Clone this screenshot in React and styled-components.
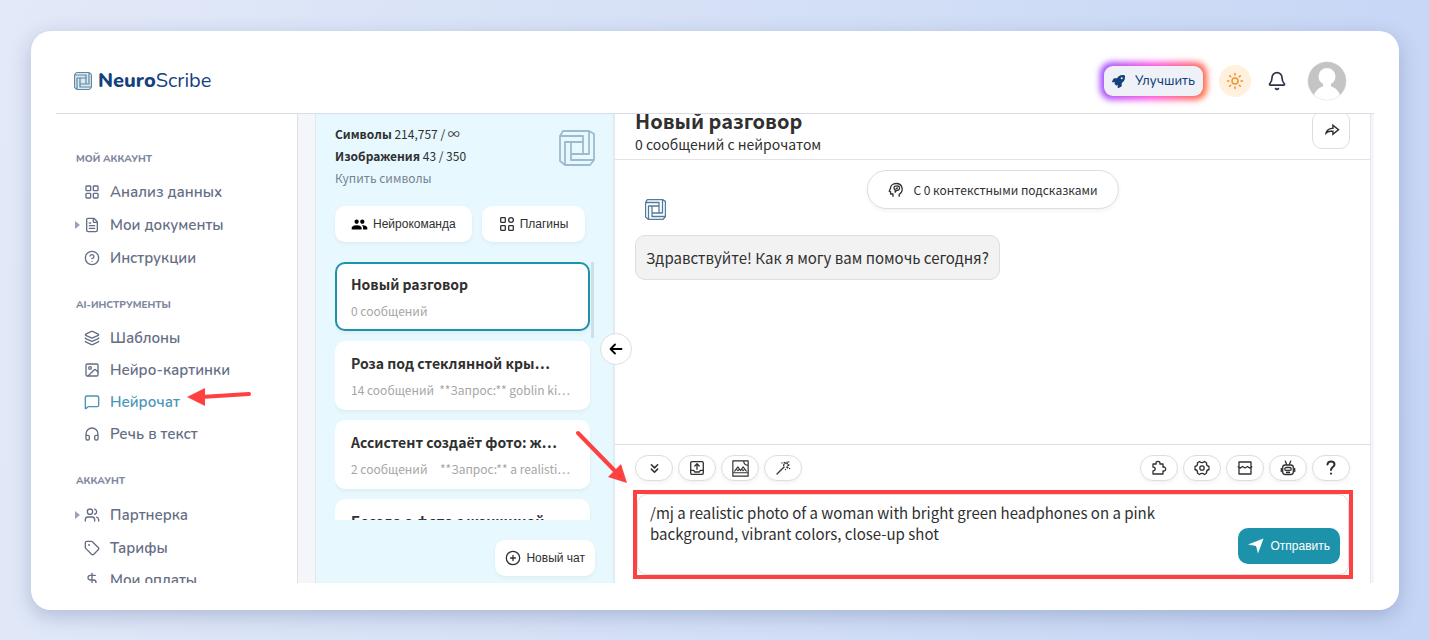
import React from "react";
import styled, { createGlobalStyle } from "styled-components";
import {
  Bell,
  ChevronsDown,
  CircleHelp,
  DollarSign,
  FileText,
  Headphones,
  Image,
  Layers,
  LayoutGrid,
  MessageSquare,
  Sun,
  Tag,
  Users,
} from "lucide-react";
import { FaRocket } from "react-icons/fa";
import { MdGroup } from "react-icons/md";
import { RiShareForwardLine } from "react-icons/ri";

const uiFont = `Nunito, "Open Sans", sans-serif`;
const chatFont = `"Noto Sans CJK SC", "Noto Sans", sans-serif`;

const GlobalStyle = createGlobalStyle`
  * {
    box-sizing: border-box;
  }

  body {
    margin: 0;
    font-family: ${uiFont};
    color: #303030;
  }

  button {
    font-family: "Liberation Sans", Arial, sans-serif;
    cursor: pointer;
  }
`;

const Page = styled.div`
  height: 100vh;
  padding: 31px 30px 30px 31px;
  display: flex;
  background: linear-gradient(100deg, #e2e9f8 0%, #d3dff6 55%, #c5d5f5 100%);
`;

const Card = styled.div`
  flex: 1;
  min-width: 0;
  display: flex;
  flex-direction: column;
  padding: 0 25px 27px;
  border-radius: 20px;
  background: white;
  box-shadow: 0 6px 20px rgba(70, 90, 140, 0.3);
`;

const TopBar = styled.header`
  height: 83px;
  flex-shrink: 0;
  display: flex;
  align-items: center;
  justify-content: space-between;
  padding: 18px 27px 0 18px;
  border-bottom: 1px solid #d8dde8;
`;

const Brand = styled.a`
  display: flex;
  align-items: center;
  gap: 6px;
  color: #14427c;
  font-size: 20px;
  line-height: 24px;
  text-decoration: none;

  b {
    font-weight: 800;
  }

  svg {
    color: #5c86a3;
    background: #dbe8ee;
    border-radius: 4px;
  }
`;

const TopActions = styled.div`
  display: flex;
  align-items: center;
`;

const UpgradeButton = styled.button`
  position: relative;
  display: flex;
  align-items: center;
  gap: 10px;
  height: 30px;
  padding: 0 8px;
  border: 0;
  border-radius: 9px;
  background: #eef2f8;
  color: #14427c;
  font-family: ${uiFont};
  font-size: 13px;
  font-weight: 500;
  transform-style: preserve-3d;

  &::before {
    content: "";
    position: absolute;
    inset: -4px;
    border-radius: 12px;
    background: linear-gradient(100deg, #9a4dff, #ff4fe0 50%, #ff6a35);
    filter: blur(3px);
    transform: translateZ(-1px);
  }
`;

const ThemeButton = styled.button`
  display: grid;
  place-items: center;
  width: 32px;
  height: 32px;
  margin-left: 16px;
  padding: 0;
  border: 0;
  border-radius: 50%;
  background: #fff1dd;
  color: #f0922b;
`;

const BellButton = styled.button`
  display: grid;
  place-items: center;
  margin: 0 20px 0 16px;
  padding: 0;
  border: 0;
  background: none;
  color: #2d3347;
`;

const Workspace = styled.div`
  flex: 1;
  min-height: 0;
  display: flex;
  overflow: hidden;
`;

const Nav = styled.nav`
  width: 242px;
  flex-shrink: 0;
  padding: 38px 0 0 20px;
  border-right: 1px solid #dcdfe9;
  overflow: hidden;
`;

const NavHeading = styled.h2`
  margin: 0 0 10px;
  color: #7f88a0;
  font-size: 10px;
  font-weight: 800;
  line-height: 14px;

  ul + & {
    margin-top: 24px;
  }
`;

const NavList = styled.ul`
  margin: 0;
  padding: 0;
  list-style: none;
`;

const NavLink = styled.a`
  position: relative;
  display: flex;
  align-items: center;
  height: ${(p) => (p.$expandable ? 34 : 32)}px;
  gap: 10px;
  padding-left: 8px;
  color: ${(p) => (p.$active ? "#4a94b8" : "#666e85")};
  font-size: 15px;
  font-weight: 600;
  text-decoration: none;

  &::before {
    content: "";
    display: ${(p) => (p.$expandable ? "block" : "none")};
    position: absolute;
    left: -1px;
    border: 4px solid transparent;
    border-left: 5px solid #99a1b8;
    border-right: 0;
  }
`;

const NavPointer = styled.svg`
  position: absolute;
  left: 111px;
  top: -17px;
  pointer-events: none;
`;

const Gutter = styled.div`
  width: ${(p) => p.$width}px;
  flex-shrink: 0;
  background: #f5f6fa;
  border-${(p) => p.$side}: 1px solid #e3e6f1;
`;

const ChatSidebar = styled.aside`
  position: relative;
  width: 299px;
  flex-shrink: 0;
  display: flex;
  flex-direction: column;
  padding: 9px 20px 7px 19px;
  background: #e7f8ff;
  box-shadow: inset -2px 0 2px rgba(0, 0, 0, 0.05);
  font-family: ${chatFont};
`;

const Usage = styled.div`
  display: flex;
  justify-content: space-between;
  margin-bottom: 17px;
  font-size: 12px;
  line-height: 22px;

  p {
    margin: 0;
  }

  a {
    color: #76828f;
    text-decoration: none;
  }

  svg {
    margin-top: 7px;
    color: #9bbccf;
  }
`;

const SidebarActions = styled.div`
  display: flex;
  gap: 10px;
  margin-bottom: 20px;
`;

const SidebarButton = styled.button`
  display: flex;
  align-items: center;
  justify-content: center;
  gap: 5px;
  height: 36px;
  padding: 0 ${(p) => p.$pad}px;
  border: 0;
  border-radius: 10px;
  background: white;
  color: #303030;
  font-size: 12px;
  box-shadow: 0 2px 4px rgba(0, 0, 0, 0.05);
`;

const ChatListWrap = styled.div`
  flex: 1;
  min-height: 0;
  display: flex;
  gap: 1px;
  overflow: hidden;
`;

const ChatList = styled.div`
  flex: 1;
  min-width: 0;
`;

const ScrollThumb = styled.div`
  width: 3px;
  height: 76px;
  margin-right: 1px;
  background: #cfdfe7;
`;

const ChatItem = styled.article`
  height: 69px;
  margin-bottom: 10px;
  padding: 9px 14px;
  border: 2px solid ${(p) => (p.$active ? "#1d93ab" : "white")};
  border-radius: 10px;
  background: white;
  box-shadow: 0 2px 4px rgba(0, 0, 0, 0.05);
  white-space: nowrap;

  h3 {
    margin: 0 0 8px;
    font-size: 14px;
    line-height: 22px;
  }
`;

const ChatItemInfo = styled.div`
  display: flex;
  justify-content: space-between;
  padding-right: 4px;
  color: #a6a6a6;
  font-size: 12px;
  line-height: 16px;
`;

const ChatSidebarFooter = styled.div`
  display: flex;
  justify-content: flex-end;
  padding-top: 20px;
`;

const CollapseButton = styled.button`
  position: absolute;
  top: 219px;
  right: -17px;
  z-index: 2;
  display: grid;
  place-items: center;
  width: 32px;
  height: 32px;
  padding: 0;
  border: 1px solid #dedede;
  border-radius: 50%;
  background: white;
  color: black;
`;

const ChatMain = styled.main`
  flex: 1;
  min-width: 0;
  display: flex;
  flex-direction: column;
  font-family: ${chatFont};
`;

const ChatHeader = styled.div`
  height: 46px;
  flex-shrink: 0;
  display: flex;
  align-items: flex-end;
  justify-content: space-between;
  padding: 0 20px 5px;
  overflow: hidden;
  border-bottom: 1px solid #e4e4e4;

  h1 {
    margin: 0;
    font-size: 20px;
    line-height: 26px;
  }

  p {
    margin: 0;
    font-size: 14px;
    line-height: 20px;
  }
`;

const ShareButton = styled.button`
  display: grid;
  place-items: center;
  width: 38px;
  height: 38px;
  margin-bottom: 5px;
  padding: 0;
  border: 1px solid #dedede;
  border-radius: 10px;
  background: white;
  color: #303030;
`;

const ChatBody = styled.div`
  position: relative;
  flex: 1;
  min-height: 0;
  padding: 39px 20px 0;
`;

const ContextPill = styled.button`
  position: absolute;
  top: 10px;
  left: 50%;
  transform: translateX(-50%);
  display: flex;
  align-items: center;
  gap: 10px;
  height: 39px;
  padding: 0 20px;
  border: 1px solid #dedede;
  border-radius: 20px;
  background: white;
  box-shadow: 0 2px 4px rgba(0, 0, 0, 0.05);
  color: #303030;
  font-family: ${chatFont};
  font-size: 12px;
  white-space: nowrap;
`;

const BotAvatar = styled.div`
  display: flex;
  margin: 0 0 15px 10px;
  color: #527c9c;
`;

const Bubble = styled.div`
  width: fit-content;
  padding: 10px;
  border: 1px solid #dedede;
  border-radius: 10px;
  background: #f2f2f2;
  font-size: 15px;
  line-height: 23px;
`;

const Composer = styled.form`
  padding: 10px 17px 4px 18px;
  border-top: 1px solid #dedede;
`;

const Tools = styled.div`
  display: flex;
  gap: 5px;
  margin: 0 3px 9px 2px;
`;

const ToolButton = styled.button`
  display: grid;
  place-items: center;
  width: 38px;
  height: 26px;
  padding: 0;
  border: 1px solid #dedede;
  border-radius: 20px;
  background: white;
  box-shadow: 0 2px 4px rgba(0, 0, 0, 0.05);
  color: #303030;
  ${(p) => p.$push && "margin-left: auto;"}
`;

const InputFrame = styled.div`
  position: relative;
  display: flex;
  border: 4px solid #ff4040;
`;

const MessageInput = styled.textarea`
  flex: 1;
  min-width: 0;
  height: 81px;
  padding: 7px 120px 7px 12px;
  border: 1px solid #dedede;
  border-radius: 10px;
  outline: none;
  resize: none;
  color: #303030;
  font-family: ${chatFont};
  font-size: 15px;
  line-height: 21px;
`;

const SendButton = styled.button`
  position: absolute;
  right: 9px;
  bottom: 11px;
  display: flex;
  align-items: center;
  justify-content: center;
  gap: 6px;
  height: 36px;
  padding: 0 10px;
  border: 0;
  border-radius: 10px;
  background: #1d93ab;
  color: white;
  font-size: 12px;
`;

const InputPointer = styled.svg`
  position: absolute;
  left: -63px;
  top: -66px;
  z-index: 3;
  pointer-events: none;
`;

const LogoMark = ({ size, stroke }) => (
  <svg width={size} height={size} viewBox="0 0 36 36" fill="none" stroke="currentColor" strokeWidth={stroke} strokeLinejoin="round">
    <path d="M4 1H30L35 4V30L31 35H6L1 31V6Z" />
    <path d="M1 6H24V24M30 1V24H12M35 30H12V12M6 35V12H24" />
  </svg>
);

// 16px line icons of the chat toolbar
const LineIcon = ({ size = 16, children }) => (
  <svg
    width={size}
    height={size}
    viewBox="0 0 16 16"
    fill="none"
    stroke="currentColor"
    strokeWidth="1.3"
    strokeLinecap="round"
    strokeLinejoin="round"
  >
    {children}
  </svg>
);

const PluginIcon = () => (
  <LineIcon>
    <rect x="1.7" y="1.7" width="4.6" height="4.6" rx=".5" />
    <rect x="1.7" y="9.7" width="4.6" height="4.6" rx=".5" />
    <rect x="9.7" y="9.7" width="4.6" height="4.6" rx=".5" />
    <circle cx="12" cy="4" r="2.4" />
  </LineIcon>
);

const AddIcon = () => (
  <LineIcon>
    <circle cx="8" cy="8" r="6.7" />
    <path d="M8 5.5v5M5.5 8h5" />
  </LineIcon>
);

const ArrowLeftIcon = () => (
  <LineIcon>
    <path d="M13.5 8H3M7 3.5L2.5 8L7 12.5" strokeWidth="1.8" />
  </LineIcon>
);

const BrainIcon = () => (
  <LineIcon>
    <path d="M11.3 14.3v-2.1C13.3 11 14.5 9 14.3 6.7C14 3.6 11.5 1.5 8.3 1.5C5 1.5 2.6 3.7 2.5 6.5L1.3 9.2L2.7 9.8V12h2.4v2.3" />
    <path d="M6.2 6.3C5.6 4.7 7.2 3.7 8.3 4.2C9.6 3.3 12 4.3 11.7 6.3C11.5 8.3 9.6 8.3 8.9 8.2L7.3 10.2V7.8C6.6 7.7 6.2 7.1 6.2 6.3ZM8.2 6.6L9.7 5.9" />
  </LineIcon>
);

const UploadIcon = () => (
  <LineIcon>
    <rect x="1.7" y="1.7" width="12.6" height="12.6" rx="1.2" />
    <path d="M8 9.3V4M5.8 6L8 3.8L10.2 6M1.7 10.3H4.7L5.7 12H10.3L11.3 10.3H14.3" />
  </LineIcon>
);

const PictureIcon = () => (
  <LineIcon size={17}>
    <path d="M11 .8H.8V15.2H15.2V5C13 5 11 4 11 .8H15.2V5M.8 12H15.2" strokeWidth="1.1" />
    <path d="M2.5 10.5L5.5 6.5L8 10L10.5 6.5L13.5 10.5M4.7 9.2L5.5 10L6.3 9.2M9.7 9.2L10.5 10L11.3 9.2" strokeWidth="1" />
  </LineIcon>
);

const WandIcon = () => (
  <LineIcon>
    <path d="M2 14L9 7" />
    <path d="M9.2 2.5L10.6 3.3L12 2.2L12.3 4L14 5L12.6 6L12.8 7.8L11.2 7M9 4.2L8.6 5.5M13.8 1.8V2M14.6 8.3V8.5M7 2.8V3M10.5 9.3V9.5" strokeDasharray="1.8 1.6" />
  </LineIcon>
);

const PuzzleIcon = () => (
  <LineIcon>
    <path d="M2 4H5.2C4.6 2.3 5.7 1.3 7 1.3C8.3 1.3 9.4 2.3 8.8 4H12V7.2C13.7 6.6 14.7 7.7 14.7 9C14.7 10.3 13.7 11.4 12 10.8V14H2V10.8C3.6 10.8 4.2 10 4.2 9C4.2 8 3.6 7.2 2 7.2Z" />
  </LineIcon>
);

const SettingsIcon = () => (
  <LineIcon>
    <path d="M5.5 1.5C7 2.8 9 2.8 10.5 1.5L12.5 2.8C12.2 4.8 13 6 15 6.5V9.5C13 10 12.2 11.2 12.5 13.2L10.5 14.5C9 13.2 7 13.2 5.5 14.5L3.5 13.2C3.8 11.2 3 10 1 9.5V6.5C3 6 3.8 4.8 3.5 2.8Z" />
    <circle cx="8" cy="8" r="2.2" />
  </LineIcon>
);

const BreakIcon = () => (
  <LineIcon>
    <path d="M2 6.5V2H14V6.5M1.2 6.8L3.5 8L5.5 6.5L8 8L10.5 6.5L12.5 8L14.8 6.8M2 8V14H14V8" />
  </LineIcon>
);

const RobotIcon = () => (
  <LineIcon>
    <path d="M5.3 1.2L6.7 4.5M10.7 1.2L9.3 4.5M1.3 8.5V11.5M14.7 8.5V11.5" />
    <rect x="2.7" y="5" width="10.6" height="9.5" rx="2.5" />
    <rect x="4.8" y="7.5" width="6.4" height="3" rx="1.5" />
    <path d="M6.5 12.5H9.5" />
  </LineIcon>
);

const QuestionIcon = () => (
  <LineIcon>
    <path d="M4.5 4.5C4.8 .5 11.5 .5 11.5 4.5C11.5 7 8 7.2 8 10M8 13.5V13.7" strokeWidth="2" />
  </LineIcon>
);

const SendIcon = () => (
  <svg width="16" height="16" viewBox="0 0 16 16" fill="currentColor">
    <path d="M0 6.5L15.5 .5L10 15.5L8 8Z" />
  </svg>
);

const UserAvatar = () => (
  <svg width="40" height="40" viewBox="0 0 40 40" role="img" aria-label="Профиль">
    <defs>
      <clipPath id="avatar-clip">
        <circle cx="20" cy="20" r="19" />
      </clipPath>
    </defs>
    <circle cx="20" cy="20" r="19.5" fill="#e6e8ee" />
    <g clipPath="url(#avatar-clip)">
      <rect width="40" height="40" fill="#c4c4c4" />
      <circle cx="20" cy="15.5" r="8.5" fill="white" />
      <rect x="16" y="20" width="8" height="8" fill="white" />
      <path d="M5.5 40C7 28 14 25 20 25C26 25 33 28 34.5 40Z" fill="white" />
    </g>
  </svg>
);

const navGroups = [
  {
    title: "МОЙ АККАУНТ",
    items: [
      { label: "Анализ данных", icon: LayoutGrid },
      { label: "Мои документы", icon: FileText, expandable: true },
      { label: "Инструкции", icon: CircleHelp },
    ],
  },
  {
    title: "AI-ИНСТРУМЕНТЫ",
    items: [
      { label: "Шаблоны", icon: Layers },
      { label: "Нейро-картинки", icon: Image },
      { label: "Нейрочат", icon: MessageSquare, active: true },
      { label: "Речь в текст", icon: Headphones },
    ],
  },
  {
    title: "АККАУНТ",
    items: [
      { label: "Партнерка", icon: Users, expandable: true },
      { label: "Тарифы", icon: Tag },
      { label: "Мои оплаты", icon: DollarSign },
    ],
  },
];

const chats = [
  { title: "Новый разговор", count: "0 сообщений", active: true },
  { title: "Роза под стеклянной кры\u22ef", count: "14 сообщений", preview: "**Запрос:** goblin ki\u22ef" },
  { title: "Ассистент создаёт фото: ж\u22ef", count: "2 сообщений", preview: "**Запрос:** a realisti\u22ef" },
  { title: "Беседа о фото с женщиной", count: "2 сообщений" },
];

const leftTools = [
  { label: "Вниз", icon: <ChevronsDown size={15} strokeWidth={2.5} /> },
  { label: "Загрузить", icon: <UploadIcon /> },
  { label: "Изображение", icon: <PictureIcon /> },
  { label: "Подсказки", icon: <WandIcon /> },
];

const rightTools = [
  { label: "Плагины", icon: <PuzzleIcon /> },
  { label: "Настройки", icon: <SettingsIcon /> },
  { label: "Очистить контекст", icon: <BreakIcon /> },
  { label: "Модель", icon: <RobotIcon /> },
  { label: "Помощь", icon: <QuestionIcon /> },
];

const Navigation = () => (
  <Nav>
    {navGroups.map((group) => (
      <React.Fragment key={group.title}>
        <NavHeading>{group.title}</NavHeading>
        <NavList>
          {group.items.map(({ label, icon: Icon, expandable, active }) => (
            <li key={label}>
              <NavLink href="#" $expandable={expandable} $active={active}>
                <Icon size={16} strokeWidth={2} />
                {label}
                {active && (
                  <NavPointer width="66" height="40" viewBox="0 0 66 40">
                    <path d="M14 28L62 25" stroke="#ff4040" strokeWidth="4" strokeLinecap="round" />
                    <path d="M0 28L18 19V37Z" fill="#ff4040" />
                  </NavPointer>
                )}
              </NavLink>
            </li>
          ))}
        </NavList>
      </React.Fragment>
    ))}
  </Nav>
);

const ChatPanel = () => (
  <ChatSidebar>
    <Usage>
      <div>
        <p>
          <b>Символы</b> 214,757 / ∞
        </p>
        <p>
          <b>Изображения</b> 43 / 350
        </p>
        <a href="#">Купить символы</a>
      </div>
      <LogoMark size={36} stroke={1.8} />
    </Usage>
    <SidebarActions>
      <SidebarButton $pad={16}>
        <MdGroup size={17} color="black" />
        Нейрокоманда
      </SidebarButton>
      <SidebarButton $pad={17}>
        <PluginIcon />
        Плагины
      </SidebarButton>
    </SidebarActions>
    <ChatListWrap>
      <ChatList>
        {chats.map((chat) => (
          <ChatItem key={chat.title} $active={chat.active}>
            <h3>{chat.title}</h3>
            <ChatItemInfo>
              <span>{chat.count}</span>
              <span>{chat.preview}</span>
            </ChatItemInfo>
          </ChatItem>
        ))}
      </ChatList>
      <ScrollThumb />
    </ChatListWrap>
    <ChatSidebarFooter>
      <SidebarButton $pad={10}>
        <AddIcon />
        Новый чат
      </SidebarButton>
    </ChatSidebarFooter>
    <CollapseButton aria-label="Свернуть">
      <ArrowLeftIcon />
    </CollapseButton>
  </ChatSidebar>
);

const Chat = () => (
  <ChatMain>
    <ChatHeader>
      <div>
        <h1>Новый разговор</h1>
        <p>0 сообщений с нейрочатом</p>
      </div>
      <ShareButton aria-label="Поделиться">
        <RiShareForwardLine size={17} />
      </ShareButton>
    </ChatHeader>
    <ChatBody>
      <BotAvatar>
        <LogoMark size={21} stroke={2.2} />
      </BotAvatar>
      <Bubble>Здравствуйте! Как я могу вам помочь сегодня?</Bubble>
      <ContextPill>
        <BrainIcon />
        С 0 контекстными подсказками
      </ContextPill>
    </ChatBody>
    <Composer onSubmit={(e) => e.preventDefault()}>
      <Tools>
        {leftTools.map((tool) => (
          <ToolButton key={tool.label} type="button" aria-label={tool.label}>
            {tool.icon}
          </ToolButton>
        ))}
        {rightTools.map((tool, i) => (
          <ToolButton key={tool.label} type="button" aria-label={tool.label} $push={i === 0}>
            {tool.icon}
          </ToolButton>
        ))}
      </Tools>
      <InputFrame>
        <MessageInput
          aria-label="Сообщение"
          defaultValue="/mj a realistic photo of a woman with bright green headphones on a pink background, vibrant colors, close-up shot"
        />
        <SendButton type="submit">
          <SendIcon />
          Отправить
        </SendButton>
        <InputPointer width="60" height="62" viewBox="0 0 60 62">
          <path d="M4 5L42 44" stroke="#ff4040" strokeWidth="4" strokeLinecap="round" />
          <path d="M53 55L34 49L47 36Z" fill="#ff4040" />
        </InputPointer>
      </InputFrame>
    </Composer>
  </ChatMain>
);

const App = () => (
  <Page>
    <GlobalStyle />
    <Card>
      <TopBar>
        <Brand href="#">
          <LogoMark size={18} stroke={2.4} />
          <span>
            <b>Neuro</b>Scribe
          </span>
        </Brand>
        <TopActions>
          <UpgradeButton>
            <FaRocket size={13} />
            Улучшить
          </UpgradeButton>
          <ThemeButton aria-label="Тема">
            <Sun size={18} strokeWidth={2} />
          </ThemeButton>
          <BellButton aria-label="Уведомления">
            <Bell size={20} strokeWidth={2} />
          </BellButton>
          <UserAvatar />
        </TopActions>
      </TopBar>
      <Workspace>
        <Navigation />
        <Gutter $width={18} $side="right" />
        <ChatPanel />
        <Chat />
        <Gutter $width={4} $side="left" />
      </Workspace>
    </Card>
  </Page>
);

export default App;
